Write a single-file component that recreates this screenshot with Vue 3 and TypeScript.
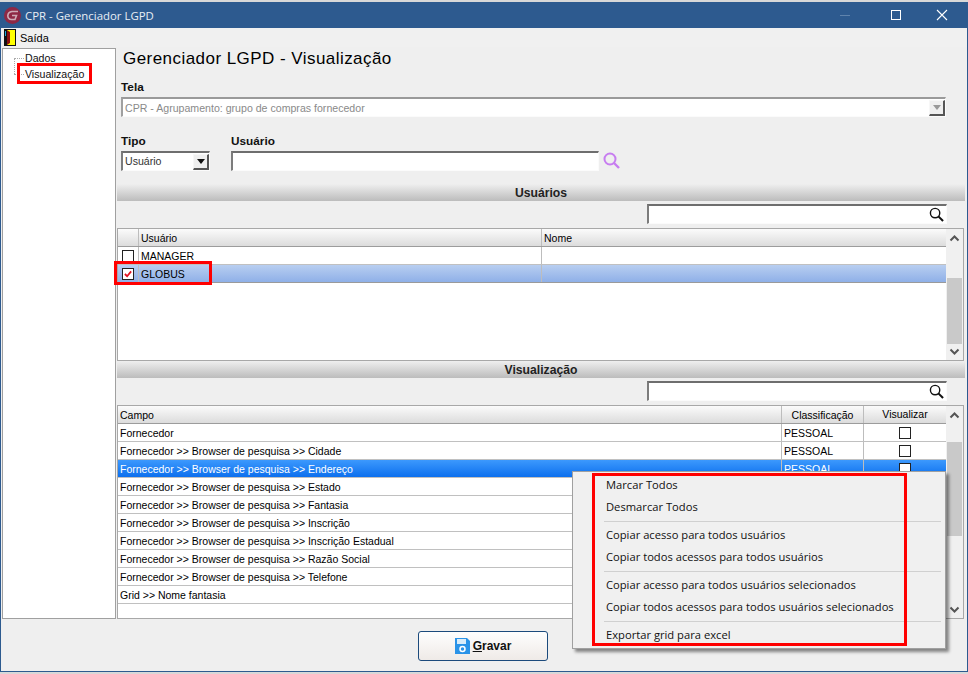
<script setup lang="ts">
const users = [
  { name: 'MANAGER', checked: false, selected: false },
  { name: 'GLOBUS', checked: true, selected: true },
]
const fields = [
  'Fornecedor',
  'Fornecedor >> Browser de pesquisa >> Cidade',
  'Fornecedor >> Browser de pesquisa >> Endereço',
  'Fornecedor >> Browser de pesquisa >> Estado',
  'Fornecedor >> Browser de pesquisa >> Fantasia',
  'Fornecedor >> Browser de pesquisa >> Inscrição',
  'Fornecedor >> Browser de pesquisa >> Inscrição Estadual',
  'Fornecedor >> Browser de pesquisa >> Razão Social',
  'Fornecedor >> Browser de pesquisa >> Telefone',
  'Grid >> Nome fantasia',
]
const menuGroups = [
  ['Marcar Todos', 'Desmarcar Todos'],
  ['Copiar acesso para todos usuários', 'Copiar todos acessos para todos usuários'],
  ['Copiar acesso para todos usuários selecionados', 'Copiar todos acessos para todos usuários selecionados'],
  ['Exportar grid para excel'],
]
</script>

<template>
  <div class="screen">
    <div class="window">
      <header class="titlebar">
        <svg class="logo" width="17" height="17" viewBox="0 0 17 17">
          <circle cx="8.500" cy="8.500" r="8.500" fill="#8e2845" />
          <path d="M14 4.500H8Q4 5 3.800 8.800Q4 12.500 7.500 12.500H11L12.500 8.500H8" fill="none" stroke="#cdaab6" stroke-width="1.600" />
        </svg>
        <span class="title-text">CPR - Gerenciador LGPD</span>
        <div class="win-buttons">
          <svg width="46" height="26" viewBox="0 0 46 26"><path d="M13 13.500H23" stroke="#5f83ad" /></svg>
          <svg width="46" height="26" viewBox="0 0 46 26"><rect x="18.500" y="8.500" width="9" height="9" fill="none" stroke="#fff" /></svg>
          <svg width="46" height="26" viewBox="0 0 46 26"><path d="M18 8L28 18M28 8L18 18" stroke="#fff" stroke-width="1.100" /></svg>
        </div>
      </header>

      <div class="menubar">
        <svg width="12" height="17" viewBox="0 0 12 17">
          <rect width="12" height="17" fill="#111" />
          <rect x="3" y="1" width="8" height="15" fill="#ffff00" />
          <path d="M3 1L6 3V14L3 16Z" fill="#8a1010" />
          <rect x="1" y="2" width="1" height="5" fill="#1fa8d8" />
        </svg>
        <span>Saída</span>
      </div>

      <div class="body">
        <aside class="tree">
          <div class="tree-item first">Dados</div>
          <div class="tree-item">Visualização</div>
        </aside>

        <main class="content">
          <div class="form">
            <h1>Gerenciador LGPD - Visualização</h1>
            <label class="lbl tela-lbl">Tela</label>
            <div class="field combo disabled">
              <span>CPR - Agrupamento: grupo de compras fornecedor</span>
              <i class="drop"><b></b></i>
            </div>
            <div class="row-fields">
              <div>
                <label class="lbl">Tipo</label>
                <div class="field combo tipo">
                  <span>Usuário</span>
                  <i class="drop"><b></b></i>
                </div>
              </div>
              <div>
                <label class="lbl">Usuário</label>
                <div class="user-line">
                  <div class="field user-input"></div>
                  <svg width="20" height="20" viewBox="0 0 20 20">
                    <circle cx="8" cy="8" r="5.500" fill="none" stroke="#c77df0" stroke-width="2" />
                    <path d="M12 12L17 17" stroke="#c77df0" stroke-width="2.400" />
                  </svg>
                </div>
              </div>
            </div>
          </div>

          <div class="section">Usuários</div>
          <div class="search-line">
            <div class="field search">
              <svg width="15" height="15" viewBox="0 0 16 16">
                <circle cx="6.500" cy="6.500" r="5" fill="none" stroke="#111" stroke-width="1.500" />
                <path d="M10 10L15 15" stroke="#111" stroke-width="2.200" />
              </svg>
            </div>
          </div>
          <div class="grid users-grid">
            <div class="grid-main">
              <div class="g-row head">
                <div class="c c-check"></div>
                <div class="c c-user">Usuário</div>
                <div class="c c-name">Nome</div>
              </div>
              <div v-for="u in users" :key="u.name" class="g-row" :class="{ soft: u.selected }">
                <div class="c c-check">
                  <span class="box" :class="{ checked: u.checked }">
                    <svg v-if="u.checked" width="8" height="8" viewBox="0 0 9 9"><path d="M1 4.500L3.500 7L8 1.500" fill="none" stroke="#e01020" stroke-width="2" /></svg>
                  </span>
                </div>
                <div class="c c-user">{{ u.name }}</div>
                <div class="c c-name"></div>
              </div>
            </div>
            <div class="scroll">
              <svg class="arrow" width="11" height="7" viewBox="0 0 11 7"><path d="M1.500 5.500L5.500 1.500L9.500 5.500" fill="none" stroke="#555" stroke-width="2" /></svg>
              <div class="track"><div class="thumb thumb-users"></div></div>
              <svg class="arrow" width="11" height="7" viewBox="0 0 11 7"><path d="M1.500 1.500L5.500 5.500L9.500 1.500" fill="none" stroke="#555" stroke-width="2" /></svg>
            </div>
          </div>

          <div class="section">Visualização</div>
          <div class="search-line">
            <div class="field search">
              <svg width="15" height="15" viewBox="0 0 16 16">
                <circle cx="6.500" cy="6.500" r="5" fill="none" stroke="#111" stroke-width="1.500" />
                <path d="M10 10L15 15" stroke="#111" stroke-width="2.200" />
              </svg>
            </div>
          </div>
          <div class="grid fields-grid">
            <div class="grid-main">
              <div class="g-row head">
                <div class="c c-field">Campo</div>
                <div class="c c-class center">Classificação</div>
                <div class="c c-view center">Visualizar</div>
              </div>
              <div v-for="(f, i) in fields" :key="f" class="g-row" :class="{ strong: i === 2 }">
                <div class="c c-field">{{ f }}</div>
                <div class="c c-class">PESSOAL</div>
                <div class="c c-view center"><span class="box"></span></div>
              </div>
            </div>
            <div class="scroll">
              <svg class="arrow" width="11" height="7" viewBox="0 0 11 7"><path d="M1.500 5.500L5.500 1.500L9.500 5.500" fill="none" stroke="#555" stroke-width="2" /></svg>
              <div class="track"><div class="thumb thumb-fields"></div></div>
              <svg class="arrow" width="11" height="7" viewBox="0 0 11 7"><path d="M1.500 1.500L5.500 5.500L9.500 1.500" fill="none" stroke="#555" stroke-width="2" /></svg>
            </div>
          </div>

          <div class="footer">
            <button class="save" type="button">
              <svg width="15" height="16" viewBox="0 0 15 16">
                <path d="M0 0H12L15 3V16H0Z" fill="#2a93e8" />
                <rect x="2" y="1" width="9" height="5" fill="#d8ecfa" />
                <circle cx="7.500" cy="11" r="2.500" fill="none" stroke="#fff" stroke-width="1.500" />
              </svg>
              <span><u>G</u>ravar</span>
            </button>
          </div>
        </main>
      </div>
    </div>

    <div class="mark mark-tree"></div>
    <div class="mark mark-user"></div>

    <div class="context">
      <template v-for="(group, gi) in menuGroups" :key="gi">
        <div v-if="gi > 0" class="sep"></div>
        <div v-for="item in group" :key="item" class="menu-item">{{ item }}</div>
      </template>
      <div class="mark mark-menu"></div>
    </div>
  </div>
</template>

<style scoped>
.screen {
  position: relative;
  width: 968px;
  height: 674px;
  overflow: hidden;
  background: #d8d8d8;
  padding-top: 2px;
  box-sizing: border-box;
  font-family: "Liberation Sans", sans-serif;
  font-size: 10.500px;
  color: #000;
}
.window {
  height: 670px;
  display: flex;
  flex-direction: column;
  background: #efefef;
  border: 1px solid #2d5a8f;
  border-top: 0;
  box-sizing: border-box;
}
.titlebar {
  height: 26px;
  flex: none;
  display: flex;
  align-items: center;
  background: #2d5a8f;
  color: #fff;
}
.logo { margin: 0 4px 0 3px; }
.title-text {
  font-family: "Open Sans", sans-serif;
  font-size: 11.400px;
  color: #e8eef5;
}
.win-buttons { margin-left: auto; margin-right: 2px; display: flex; }
.menubar {
  height: 19px;
  flex: none;
  display: flex;
  align-items: center;
  gap: 4px;
  padding-left: 3px;
  font-size: 11px;
  background: #f0f0f0;
}
.body { flex: 1; display: flex; min-height: 0; }
.tree {
  width: 114px;
  height: 571px;
  margin: 1px 0 0 1px;
  flex: none;
  background: #fff;
  border: 1px solid #a0a0a0;
  box-sizing: border-box;
  padding: 1px 0 0 22px;
  position: relative;
}
.tree-item {
  height: 16px;
  line-height: 16px;
  position: relative;
  color: #111;
  font-size: 10.600px;
}
.tree-item::before {
  content: "";
  position: absolute;
  left: -11px;
  top: 8px;
  width: 10px;
  border-top: 1px dotted #aaa;
}
.tree-item.first::after {
  content: "";
  position: absolute;
  left: -11px;
  top: 8px;
  height: 16px;
  border-left: 1px dotted #aaa;
}
.content {
  flex: 1;
  min-width: 0;
  display: flex;
  flex-direction: column;
  margin-left: 1px;
}
.form { height: 137px; flex: none; padding-left: 4px; box-sizing: border-box; margin-right: 4px; }
h1 {
  margin: 0;
  padding: 0 0 0 2px;
  height: 30px;
  font-family: "Liberation Sans", sans-serif;
  font-size: 17px;
  font-weight: 400;
  line-height: 24px;
  letter-spacing: 0.450px;
}
.lbl {
  display: block;
  height: 18px;
  line-height: 17px;
  font-weight: 700;
  font-size: 11.800px;
  color: #111;
}
.tela-lbl { margin: 2px 0; height: 16px; line-height: 16px; }
.field {
  background: #fff;
  box-sizing: border-box;
  border: 1px solid #fbfbfb;
  border-top: 2px solid #6e6e6e;
  border-left: 2px solid #7c7c7c;
  position: relative;
}
.combo {
  display: flex;
  align-items: center;
  height: 20px;
  padding-left: 2px;
  font-size: 10.600px;
  color: #333;
}
.combo.disabled {
  width: 825px;
  color: #8a8a8a;
  border-top-color: #9a9a9a;
  border-left-color: #a0a0a0;
}
.combo.tipo { width: 89px; }
.combo.tipo span { margin-top: -1px; }
.drop {
  margin-left: auto;
  width: 16px;
  height: 16px;
  flex: none;
  box-sizing: border-box;
  background: #efefef;
  border: 1px solid #f7f7f7;
  border-right: 2px solid #555;
  border-bottom: 2px solid #555;
  display: flex;
  align-items: center;
  justify-content: center;
}
.drop b {
  width: 0;
  height: 0;
  border: 4px solid transparent;
  border-top: 5px solid #111;
  border-bottom: 0;
}
.disabled .drop b { border-top-color: #999; }
.row-fields { display: flex; gap: 21px; margin-top: 16px; }
.user-line { display: flex; align-items: center; gap: 3px; }
.user-input { width: 368px; height: 20px; }
.section {
  height: 17px;
  flex: none;
  margin-right: 2px;
  line-height: 19px;
  text-align: center;
  font-weight: 700;
  font-size: 12.200px;
  color: #222;
  background: linear-gradient(#efefef, #bcbcbc);
}
.search-line {
  height: 27px;
  flex: none;
  display: flex;
  justify-content: flex-end;
  padding: 3px 20px 0 0;
  box-sizing: border-box;
}
.search {
  width: 300px;
  height: 20px;
  display: flex;
  align-items: center;
  justify-content: flex-end;
  padding-right: 2px;
}
.grid {
  flex: none;
  margin-right: 3px;
  display: flex;
  border: 1px solid #a8a8a8;
  box-sizing: border-box;
  background: #fff;
}
.users-grid { height: 133px; }
.fields-grid { height: 214px; }
.grid-main { flex: 1; min-width: 0; }
.g-row {
  display: flex;
  height: 18px;
  box-sizing: border-box;
  border-bottom: 1px solid #c0c0c0;
}
.g-row.head {
  background: linear-gradient(#fbfbfb, #dcdcdc);
  border-bottom: 1px solid #9c9c9c;
}
.g-row.soft {
  background: linear-gradient(#b8cef0, #8fb0e8);
  border-bottom-color: #9a9a9a;
}
.g-row.strong {
  background: linear-gradient(#3c99fd, #0c6fee);
  color: #fff;
}
.c {
  box-sizing: border-box;
  line-height: 19px;
  padding-left: 2px;
  border-right: 1px solid #bdbdbd;
  white-space: nowrap;
  overflow: hidden;
}
.c:last-child { border-right: 0; }
.c-check { width: 21px; display: flex; align-items: center; padding-left: 4px; }
.c-user { width: 403px; }
.c-name { flex: 1; }
.c-field { width: 664px; }
.c-class { width: 82px; }
.c-view { flex: 1; }
.center { text-align: center; padding-left: 0; }
.c-view.center { display: flex; align-items: center; justify-content: center; }
.box {
  display: inline-flex;
  align-items: center;
  justify-content: center;
  width: 10px;
  height: 10px;
  flex: none;
  border: 1px solid #222;
  background: #fff;
}
.scroll {
  width: 17px;
  flex: none;
  background: #f0f0f0;
  display: flex;
  flex-direction: column;
  align-items: center;
  padding: 6px 0 5px;
  box-sizing: border-box;
}
.track { flex: 1; width: 100%; padding-top: 2px; box-sizing: border-box; }
.thumb { background: #c9c9c9; margin: 0 1px; }
.thumb-users { height: 66px; margin-top: 34px; }
.thumb-fields { height: 94px; margin-top: 21px; }
.footer { flex: 1; display: flex; padding: 12px 0 0 301px; box-sizing: border-box; }
.save {
  width: 130px;
  height: 30px;
  display: flex;
  align-items: center;
  justify-content: center;
  gap: 3px;
  padding: 0;
  border: 1px solid #1b4a7c;
  border-radius: 3px;
  background: linear-gradient(#fefefe, #efeae7);
  font-family: "Liberation Sans", sans-serif;
  font-size: 12px;
  font-weight: 700;
  color: #111;
}
.context {
  position: absolute;
  left: 572px;
  top: 471px;
  width: 374px;
  height: 178px;
  box-sizing: border-box;
  background: #f0f0f0;
  border: 1px solid #a0a0a0;
  box-shadow: 3px 3px 3px rgba(0, 0, 0, 0.45);
  padding: 2px 2px;
  font-family: "Open Sans", sans-serif;
  font-size: 11.200px;
  color: #111;
}
.menu-item { height: 22px; line-height: 22px; padding-left: 31px; white-space: nowrap; }
.sep { height: 1px; background: #d0d0d0; margin: 3px 2px 2px 29px; }
.mark { position: absolute; border: 3px solid #f00; box-sizing: border-box; }
.mark-tree { left: 17px; top: 63px; width: 75px; height: 21px; }
.mark-user { left: 114px; top: 261px; width: 98px; height: 24px; }
.mark-menu { left: 19px; top: 1px; width: 315px; height: 173px; }
</style>
